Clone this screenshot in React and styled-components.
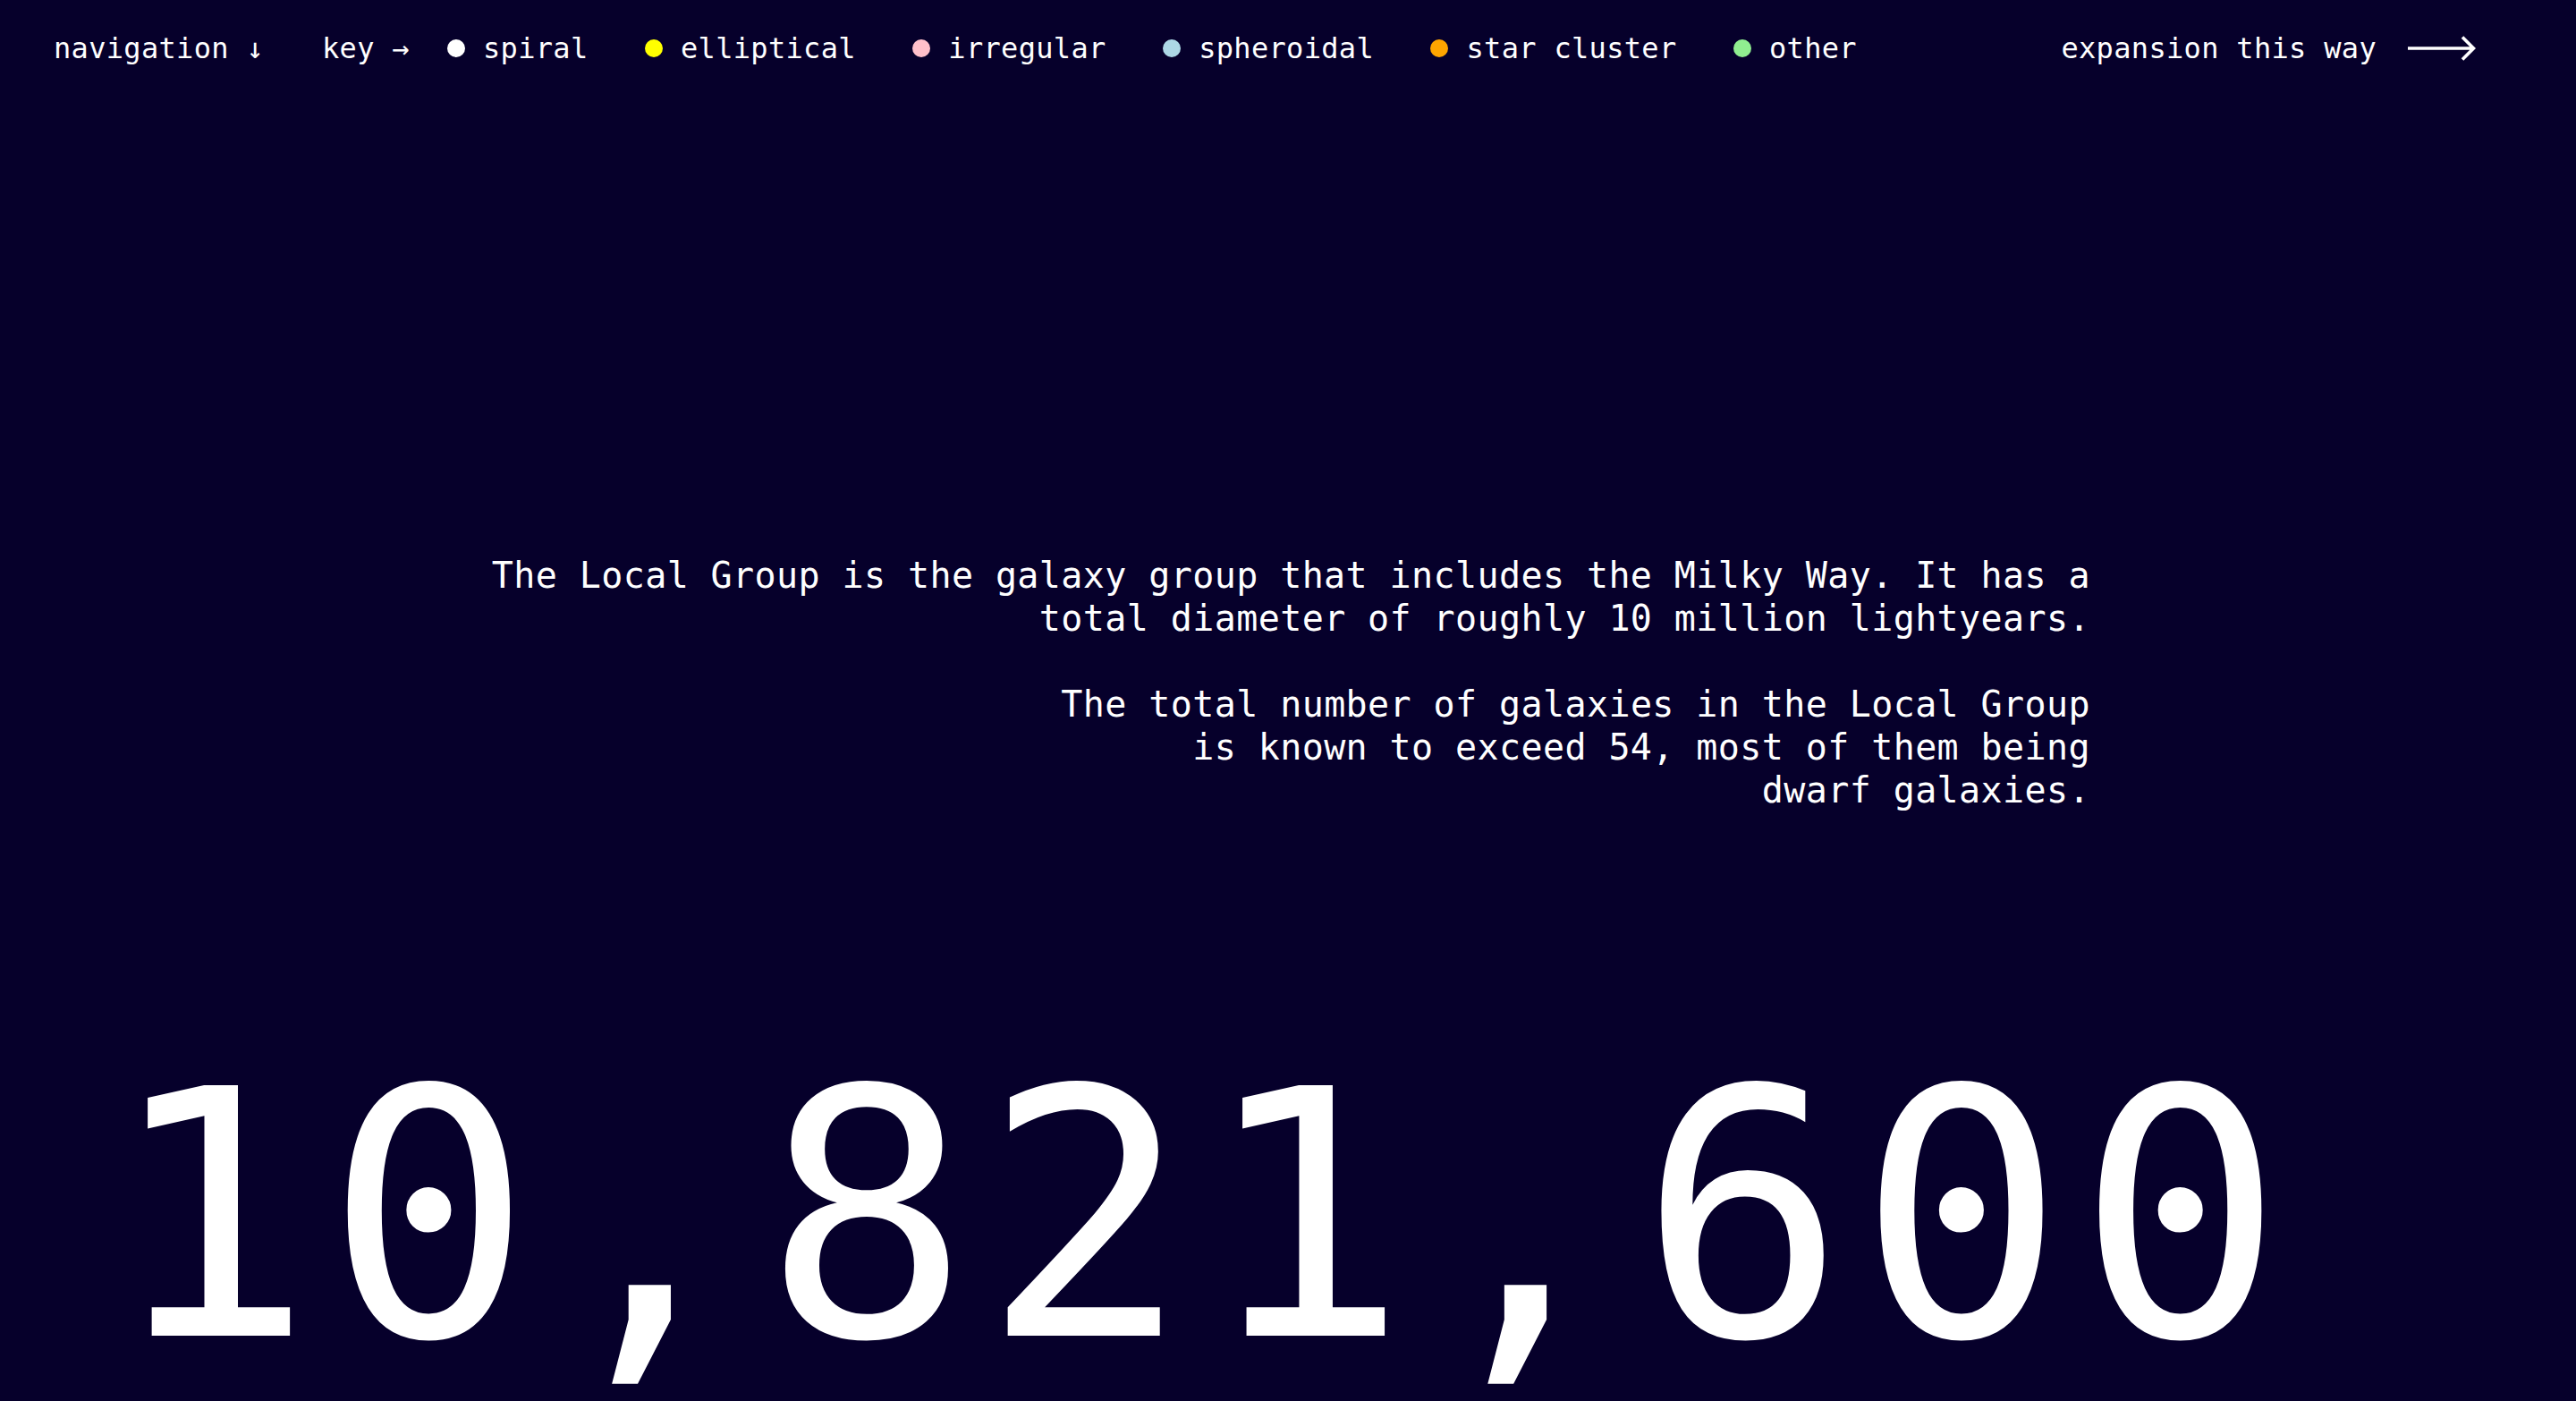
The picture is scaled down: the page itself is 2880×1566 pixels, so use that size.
import React from "react";
import styled, { createGlobalStyle } from "styled-components";

const GlobalStyle = createGlobalStyle`
  html, body {
    margin: 0;
    padding: 0;
    background: #06002b;
  }
  body {
    font-family: "DejaVu Sans Mono", "Liberation Mono", monospace;
    color: #ffffff;
    -webkit-font-smoothing: antialiased;
  }
`;

const Page = styled.div`
  min-height: 100vh;
  background: #06002b;
  color: #ffffff;
  overflow: hidden;
`;

const Nav = styled.nav`
  display: flex;
  align-items: center;
  padding: 34px 112px 34px 60px;
  font-size: 32px;
  line-height: 40px;
  letter-spacing: 0.32px;
  white-space: nowrap;
`;

const NavLabel = styled.span`
  margin-right: ${(p) => p.$gap}px;
`;

const Legend = styled.ul`
  display: flex;
  align-items: center;
  gap: 63.5px;
  list-style: none;
  margin: 0;
  padding: 0;
`;

const LegendItem = styled.li`
  display: flex;
  align-items: center;
`;

const Dot = styled.span`
  display: inline-block;
  width: 20px;
  height: 20px;
  border-radius: 50%;
  background: ${(p) => p.$color};
  margin-right: 20px;
`;

const Expansion = styled.div`
  margin-left: auto;
  display: flex;
  align-items: center;
  gap: 35px;
`;

const Description = styled.section`
  width: 1794px;
  margin: 511px auto 0;
  text-align: right;
  font-size: 40px;
  line-height: 48px;
  letter-spacing: 0.4px;
`;

const Paragraph = styled.p`
  margin: ${(p) => (p.$first ? "0" : "48px")} 0 0 auto;
  max-width: ${(p) => p.$width}px;
  text-wrap: pretty;
`;

const BigNumber = styled.div`
  margin-top: 262px;
  padding-left: 119px;
  font-size: 384px;
  line-height: 384px;
  letter-spacing: 13.6px;
  white-space: nowrap;
`;

const LongArrow = () => (
  <svg width="76" height="30" viewBox="0 0 76 30" fill="none">
    <path
      d="M0 15 H73 M61 2.5 L73.5 15 L61 27.5"
      stroke="#ffffff"
      strokeWidth="3.6"
      strokeLinecap="butt"
      strokeLinejoin="miter"
    />
  </svg>
);

const legend = [
  { label: "spiral", color: "#ffffff" },
  { label: "elliptical", color: "#ffff00" },
  { label: "irregular", color: "#ffc0cb" },
  { label: "spheroidal", color: "#add8e6" },
  { label: "star cluster", color: "#ffa500" },
  { label: "other", color: "#90ee90" },
];

export default function App() {
  return (
    <Page>
      <GlobalStyle />
      <Nav>
        <NavLabel $gap={65}>navigation ↓</NavLabel>
        <NavLabel $gap={42}>key →</NavLabel>
        <Legend>
          {legend.map((item) => (
            <LegendItem key={item.label}>
              <Dot $color={item.color} />
              <span>{item.label}</span>
            </LegendItem>
          ))}
        </Legend>
        <Expansion>
          <span>expansion this way</span>
          <LongArrow />
        </Expansion>
      </Nav>
      <Description>
        <Paragraph $first $width={1794}>
          The Local Group is the galaxy group that includes the Milky Way. It
          has a total diameter of roughly 10 million lightyears.
        </Paragraph>
        <Paragraph $width={1200}>
          The total number of galaxies in the Local Group is known to exceed
          54, most of them being dwarf galaxies.
        </Paragraph>
      </Description>
      <BigNumber>10,821,600</BigNumber>
    </Page>
  );
}
